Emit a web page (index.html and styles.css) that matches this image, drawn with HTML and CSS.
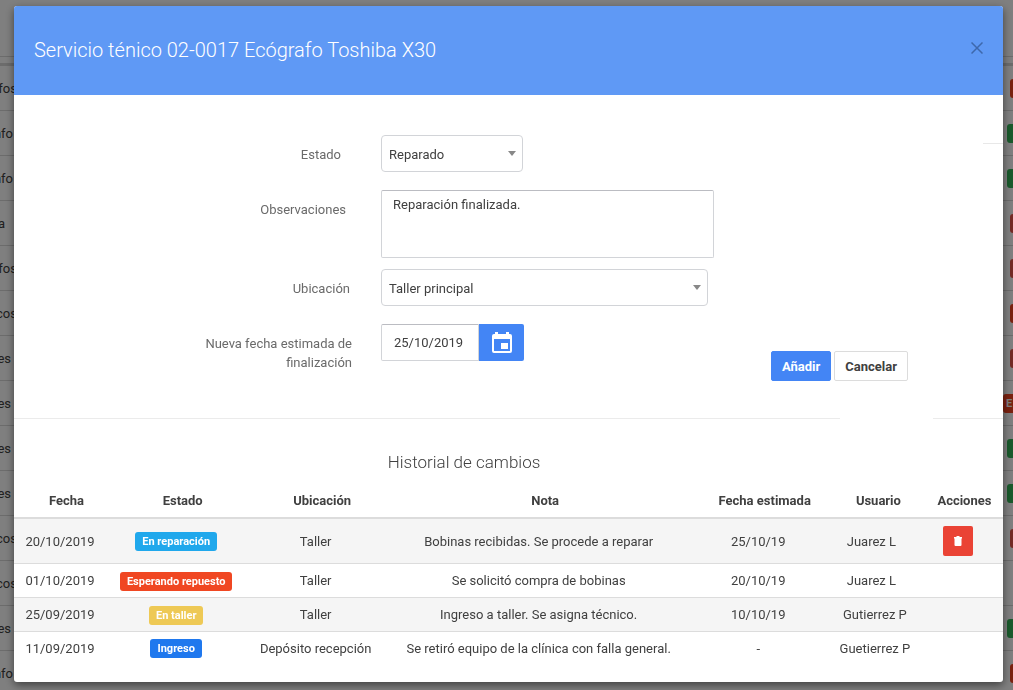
FILE: index.html
```html
<!DOCTYPE html>
<html lang="es">
<head>
<meta charset="utf-8">
<title>Servicio técnico</title>
<link rel="stylesheet" href="styles.css">
</head>
<body>
<div class="page" aria-hidden="true">
  <div class="page-head"></div>
  <div class="page-row"><span class="kind">fos</span><span class="state orange"></span></div>
  <div class="page-row"><span class="kind kind-nfo">nfo</span><span class="state green"></span></div>
  <div class="page-row"><span class="kind kind-nfo">nfo</span><span class="state green"></span></div>
  <div class="page-row"><span class="kind kind-a">a</span><span class="state red"></span></div>
  <div class="page-row"><span class="kind">fos</span><span class="state red"></span></div>
  <div class="page-row"><span class="kind">cos</span><span class="state orange"></span></div>
  <div class="page-row"><span class="kind kind-es">es</span><span class="state red"></span></div>
  <div class="page-row"><span class="kind kind-es">es</span><span class="state orange wide">E</span></div>
  <div class="page-row"><span class="kind kind-es">es</span><span class="state green"></span></div>
  <div class="page-row"><span class="kind kind-es">es</span><span class="state green"></span></div>
  <div class="page-row"><span class="kind">cos</span><span class="state red"></span></div>
  <div class="page-row"><span class="kind">cos</span></div>
  <div class="page-row"><span class="kind kind-es">es</span><span class="state green"></span></div>
  <div class="page-row"><span class="kind kind-nfo">nfo</span><span class="state orange"></span></div>
</div>

<div class="backdrop">
  <section class="dialog" role="dialog" aria-labelledby="dialog-title">
    <header class="dialog-head">
      <h1 class="dialog-title" id="dialog-title">Servicio ténico 02-0017 Ecógrafo Toshiba X30</h1>
      <button class="close" type="button" aria-label="Cerrar">
        <svg width="12" height="12" viewBox="0 0 12 12" fill="none" stroke="currentColor" stroke-width="1.5"><path d="M.5.5l11 11M11.5.5l-11 11"/></svg>
      </button>
    </header>

    <form class="form">
      <div class="fields">
        <div class="field field-state">
          <label for="estado">Estado</label>
          <div class="select-box select-small">
            <select id="estado"><option>Reparado</option></select>
          </div>
        </div>
        <div class="field field-notes">
          <label for="observaciones">Observaciones</label>
          <textarea id="observaciones">Reparación finalizada.</textarea>
        </div>
        <div class="field field-place">
          <label for="ubicacion">Ubicación</label>
          <div class="select-box select-large">
            <select id="ubicacion"><option>Taller principal</option></select>
          </div>
        </div>
        <div class="field field-date">
          <label for="fecha">Nueva fecha estimada de finalización</label>
          <div class="date-group">
            <input id="fecha" type="text" value="25/10/2019">
            <button class="calendar" type="button" aria-label="Elegir fecha">
              <svg width="20" height="22" viewBox="0 0 20 22"><path fill="#fff" fill-rule="evenodd" d="M3 0h3v2h8V0h3v2h1a2 2 0 0 1 2 2v15a2 2 0 0 1-2 2H2a2 2 0 0 1-2-2V4a2 2 0 0 1 2-2h1zM2 7v12h16V7zM9 11h7v6H9z"/></svg>
            </button>
          </div>
        </div>
      </div>
      <div class="actions">
        <button class="btn btn-primary" type="button">Añadir</button>
        <button class="btn" type="button">Cancelar</button>
      </div>
    </form>

    <div class="divider"><span class="rule rule-long"></span><span class="rule rule-short"></span></div>

    <h2 class="history-title">Historial de cambios</h2>
    <table class="history">
      <colgroup>
        <col class="c-date"><col class="c-state"><col class="c-place"><col class="c-note"><col class="c-due"><col class="c-user"><col class="c-act">
      </colgroup>
      <thead>
        <tr><th>Fecha</th><th>Estado</th><th>Ubicación</th><th>Nota</th><th>Fecha estimada</th><th class="user-head">Usuario</th><th>Acciones</th></tr>
      </thead>
      <tbody>
        <tr class="current">
          <td>20/10/2019</td><td><span class="tag tag-repair">En reparación</span></td><td>Taller</td><td>Bobinas recibidas. Se procede a reparar</td><td>25/10/19</td><td class="short-name">Juarez L</td>
          <td><button class="delete" type="button" aria-label="Eliminar"><svg width="8" height="10" viewBox="0 0 8 10"><path fill="#fff" d="M0 1h2l1-1h2l1 1h2v1.500H7.500V9a1 1 0 0 1-1 1h-5a1 1 0 0 1-1-1V2.500H0z"/></svg></button></td>
        </tr>
        <tr><td>01/10/2019</td><td><span class="tag tag-wait">Esperando repuesto</span></td><td>Taller</td><td>Se solicitó compra de bobinas</td><td>20/10/19</td><td class="short-name">Juarez L</td><td></td></tr>
        <tr><td>25/09/2019</td><td><span class="tag tag-shop">En taller</span></td><td>Taller</td><td>Ingreso a taller. Se asigna técnico.</td><td>10/10/19</td><td>Gutierrez P</td><td></td></tr>
        <tr><td>11/09/2019</td><td><span class="tag tag-entry">Ingreso</span></td><td>Depósito recepción</td><td>Se retiró equipo de la clínica con falla general.</td><td>-</td><td>Guetierrez P</td><td></td></tr>
      </tbody>
    </table>
  </section>
</div>
</body>
</html>
```
FILE: styles.css
```css
* { box-sizing: border-box; }

body {
  margin: 0;
  height: 100vh;
  overflow: hidden;
  background: #fff;
  color: #404040;
  font: 13px/19px Roboto, "Open Sans", sans-serif;
}

button, input, select, textarea { font: inherit; color: inherit; }
button { cursor: pointer; }

/* Page behind the dialog */
.page-head {
  height: 66px;
  border-bottom: 3px solid #d8d8d8;
  background: linear-gradient(#d8d8d8, #d8d8d8) 0 56px / 100% 1px no-repeat;
}
.page-row {
  display: flex;
  align-items: center;
  justify-content: space-between;
  height: 45px;
  border-bottom: 1px solid #d8d8d8;
}
.kind {
  display: flex;
  justify-content: flex-end;
  width: 17px;
}
.kind-nfo { width: 13px; }
.kind-es { width: 11px; }
.kind-a { width: 5px; }
.state {
  width: 3px;
  height: 19px;
  border-radius: 3px 0 0 3px;
}
.orange { background: #f4431f; }
.red { background: #e8544a; }
.green { width: 6px; background: #34b458; }
.wide {
  width: 10px;
  padding-left: 3px;
  color: #fff;
  font-size: 11px;
  font-weight: 700;
}

/* Dialog */
.backdrop {
  position: fixed;
  inset: 0;
  padding: 6px 10px 8px 14px;
  background: rgba(0, 0, 0, .5);
}
.dialog {
  border-radius: 3px;
  overflow: hidden;
  background: #fff;
  box-shadow: 0 3px 9px rgba(0, 0, 0, .5);
  padding-bottom: 18px;
}
.dialog-head {
  display: flex;
  align-items: center;
  justify-content: space-between;
  height: 89px;
  padding: 0 20px 2px;
  background: #5f99f5;
}
.dialog-title {
  margin: 0;
  color: #fff;
  font-size: 20px;
  font-weight: 300;
  line-height: 24px;
}
.close {
  display: flex;
  margin: 0 0 3px;
  padding: 0;
  border: 0;
  background: none;
  color: #3e68ac;
}

/* Form */
.form {
  position: relative;
  display: flex;
  align-items: flex-end;
  justify-content: space-between;
  padding: 40px 95px 37px 0;
}
.form::after {
  content: "";
  position: absolute;
  top: 48px;
  right: 0;
  width: 20px;
  height: 1px;
  background: #e8e8e8;
}
.fields {
  flex: 1;
  padding-bottom: 9px;
}
.field {
  display: grid;
  grid-template-columns: 367px 1fr;
  align-items: start;
}
.field label {
  justify-self: end;
  max-width: 180px;
  padding-top: 10px;
  color: #6a6a6a;
  text-align: right;
}
.field-state label { padding-right: 40px; }
.field-notes label { padding-right: 35px; }
.field-place label { padding-right: 31px; }
.field-date label { padding-right: 29px; }
.field-notes { margin-top: 18px; }
.field-place { margin-top: 11px; }
.field-date { margin-top: 18px; }

.select-box {
  display: grid;
  align-items: center;
}
.select-box > select { grid-area: 1 / 1; }
.select-box::after {
  content: "";
  grid-area: 1 / 1;
  justify-self: end;
  margin-right: 7px;
  border: 4px solid transparent;
  border-top: 5px solid #888;
  border-bottom: 0;
  pointer-events: none;
}
.select-small { width: 142px; }
.select-large { width: 327px; }
select {
  appearance: none;
  width: 100%;
  height: 37px;
  padding: 1px 7px 0;
  border: 1px solid #d2d4d8;
  border-radius: 4px;
  background: #fff;
}
textarea {
  display: block;
  width: 333px;
  height: 68px;
  padding: 4px 11px;
  border: 1px solid #d2d4d8;
  border-top-color: #bbbcc2;
  border-radius: 2px;
  resize: none;
}
.date-group { display: flex; }
.date-group input {
  width: 98px;
  height: 37px;
  padding: 0 12px;
  border: 1px solid #d2d4d8;
  border-top-color: #bbbcc2;
  border-radius: 2px 0 0 2px;
}
.calendar {
  display: flex;
  align-items: center;
  justify-content: center;
  width: 45px;
  padding: 0;
  border: 0;
  border-radius: 0 2px 2px 0;
  background: #4385f5;
}
.actions {
  display: flex;
  gap: 3px;
}
.btn {
  height: 30px;
  padding: 0 10px;
  border: 1px solid #dcdcdc;
  border-radius: 2px;
  background: #fff;
  font-weight: 700;
}
.btn-primary {
  border-color: #4385f5;
  background: #4385f5;
  color: #fff;
}

.divider {
  display: flex;
  gap: 93px;
}
.rule {
  height: 1px;
  background: #ebebeb;
}
.rule-long { flex: 1; }
.rule-short { width: 70px; }

/* History */
.history-title {
  margin: 32px 89px 16px 0;
  font-size: 17px;
  font-weight: 300;
  line-height: 22px;
  text-align: center;
}
.history {
  width: 100%;
  table-layout: fixed;
  border-collapse: separate;
  border-spacing: 0;
  text-align: center;
}
.c-date { width: 9.3%; }
.c-state { width: 14.2%; }
.c-place { width: 14%; }
.c-note { width: 31.1%; }
.c-due { width: 13.3%; }
.c-user { width: 10.3%; }
.c-act { width: 7.8%; }
.history th {
  height: 30px;
  padding: 0 0 6px 13px;
  border-bottom: 2px solid #dcdcdc;
  white-space: nowrap;
}
.history .user-head { padding-left: 7px; }
.history th:last-child { padding-left: 0; }
.history td {
  height: 34px;
  padding: 0;
  border-bottom: 1px solid #dcdcdc;
}
.history .current td { height: 45px; }
.history tr:last-child td { border-bottom: 0; height: 32px; }
.history td:last-child { padding-right: 13px; }
.history .short-name { padding-right: 7px; }
.history tbody tr:nth-child(odd) { background: #f5f5f5; }
.tag {
  display: inline-block;
  padding: 0 7px;
  border-radius: 3px;
  color: #fff;
  font-size: 11px;
  font-weight: 700;
  vertical-align: middle;
}
.tag-repair { background: #20a8ec; }
.tag-wait { background: #f04722; }
.tag-shop { background: #eec955; }
.tag-entry { background: #1f78ee; }
.delete {
  display: flex;
  align-items: center;
  justify-content: center;
  width: 30px;
  height: 30px;
  margin: 0 auto;
  padding: 0;
  border: 0;
  border-radius: 2px;
  background: #ea4335;
}
```
